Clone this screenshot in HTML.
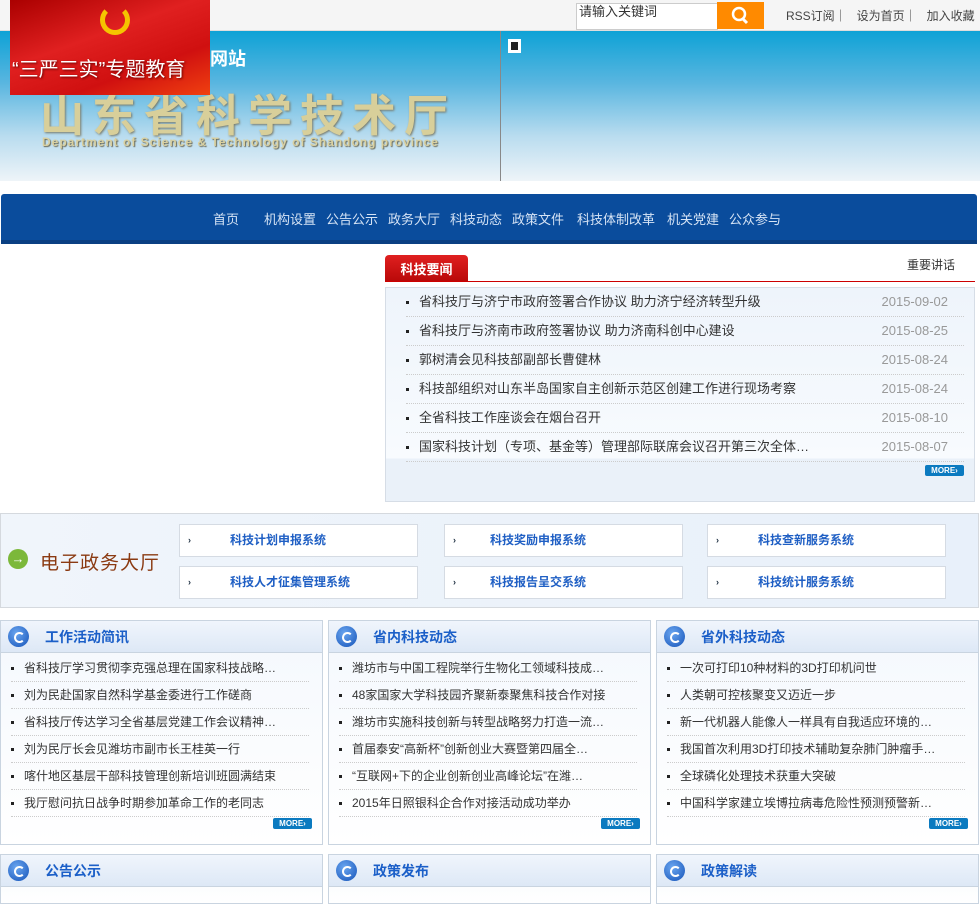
<!DOCTYPE html><html><head><meta charset="utf-8"><style>
*{margin:0;padding:0;box-sizing:border-box}
body{width:980px;height:891px;overflow:hidden;background:#fff;font-family:"Liberation Sans","Noto Sans CJK SC",sans-serif;font-size:13px;color:#333;position:relative}
.a{position:absolute}
.top{left:0;top:0;width:980px;height:31px;background:#f5f5f5;border-bottom:1px solid #ddd}
.banner{left:0;top:31px;width:980px;height:150px;background:linear-gradient(180deg,#0ea2d6 0%,#5ab6e0 35%,#b9dcef 70%,#eef4f8 100%)}
.nav{left:1px;top:194px;width:976px;height:50px;background:#0a4c9c;border-bottom:4px solid #0a3f82;border-radius:3px 3px 0 0}
.nav span{position:absolute;top:15px;color:#d5e3f5;font-size:13px}
.dot{display:inline-block;width:3px;height:3px;background:#222;margin-right:10px;vertical-align:middle}
.nl li{list-style:none;position:absolute;left:20px;right:10px;height:29px;border-bottom:1px dotted #ccc;font-size:13px;color:#333;line-height:28px}
.nl li b{position:absolute;right:16px;font-weight:normal;color:#999;font-size:13px}
.btn{position:absolute;width:239px;height:33px;background:#fff;border:1px solid #d5dbe3;color:#1f5fc4;font-weight:bold;font-size:12px;line-height:31px}
.btn i{position:absolute;left:8px;font-style:normal;font-size:9px;color:#234}
.btn span{position:absolute;left:50px}
.col{position:absolute;width:323px;border:1px solid #c9d4e0;background:linear-gradient(#f4f8fd,#fff)}
.ch{height:32px;background:linear-gradient(#f0f5fc,#dde8f6);border-bottom:1px solid #c9d4e0;position:relative}
.ch .ic{position:absolute;left:7px;top:5px;width:21px;height:21px;border-radius:50%;background:radial-gradient(circle at 40% 35%,#6aa6f0,#1553b8);}
.ch .ic:after{content:"";position:absolute;left:6px;top:6px;width:7px;height:7px;border-radius:50%;border:2px solid #fff;border-right-color:transparent}
.ch b{position:absolute;left:44px;top:6px;color:#1b5fc8;font-size:14px}
.cl li{list-style:none;position:absolute;left:10px;width:298px;height:27px;border-bottom:1px dotted #ccc;font-size:12px;line-height:26px;color:#333;white-space:nowrap;overflow:hidden}
.more{position:absolute;width:39px;height:11px;background:#0b7ac0;border-radius:2px;color:#fff;font-size:8px;font-weight:bold;text-align:center;line-height:11px}
</style></head><body>
<div class="a top"></div>
<div class="a" style="left:576px;top:3px;width:142px;height:27px;background:#fff;border:1px solid #ccc;font-size:13px;padding:0 2px;line-height:16px">请输入关键词</div>
<div class="a" style="left:717px;top:2px;width:47px;height:27px;background:#ff8a00"><svg width="47" height="27"><circle cx="22" cy="12" r="6" fill="none" stroke="#fff" stroke-width="2.5"/><line x1="26" y1="17" x2="30" y2="21" stroke="#fff" stroke-width="3"/></svg></div>
<div class="a" style="left:786px;top:7px;font-size:12px;color:#444">RSS订阅｜ &nbsp; 设为首页｜ &nbsp; 加入收藏</div>
<div class="a banner"></div>
<div class="a" style="left:500px;top:31px;width:1px;height:150px;background:#888"></div>
<div class="a" style="left:508px;top:39px;width:13px;height:14px;background:#fff"><div style="margin:3px;width:7px;height:8px;background:#222"></div></div>
<div class="a" style="left:40px;top:80px;font-size:44px;font-weight:bold;color:#d8cf9a;letter-spacing:8px;text-shadow:1px 1px 2px #776">山东省科学技术厅</div>
<div class="a" style="left:42px;top:135px;font-size:12px;font-weight:bold;color:#d9d0a0;letter-spacing:1px;text-shadow:1px 1px 1px #665">Department of Science &amp; Technology of Shandong province</div>
<div class="a" style="left:210px;top:45px;font-size:18px;font-weight:bold;color:#fff">网站</div>
<div class="a" style="left:10px;top:0;width:200px;height:95px;background:linear-gradient(160deg,#a00 0%,#e02020 40%,#d01010 70%,#f04010 100%)"></div>
<div class="a" style="left:100px;top:5px;width:30px;height:30px;border-radius:50%;border:5px solid #f5c400;border-top-color:transparent"></div>
<div class="a" style="left:12px;top:53px;font-size:20px;color:#fff;text-shadow:1px 1px 2px #600">“三严三实”专题教育</div>
<div class="a nav"><span style="left:212px">首页</span><span style="left:263px">机构设置</span><span style="left:325px">公告公示</span><span style="left:387px">政务大厅</span><span style="left:449px">科技动态</span><span style="left:511px">政策文件</span><span style="left:576px">科技体制改革</span><span style="left:666px">机关党建</span><span style="left:728px">公众参与</span></div>
<div class="a" style="left:385px;top:255px;width:83px;height:27px;background:linear-gradient(#e02020,#b80808);border-radius:4px 4px 0 0;color:#fff;font-weight:bold;font-size:13px;line-height:29px;text-align:center">科技要闻</div>
<div class="a" style="left:385px;top:281px;width:590px;height:1px;background:#c00"></div>
<div class="a" style="left:907px;top:256px;font-size:12px;color:#333">重要讲话</div>
<div class="a" style="left:385px;top:287px;width:590px;height:215px;border:1px solid #d6dde6;background:linear-gradient(#eef4fb,#f8fbfe 80%,#eaf1f9 80%)">
<ul class="nl">
<li style="top:0"><span class="dot"></span>省科技厅与济宁市政府签署合作协议 助力济宁经济转型升级<b>2015-09-02</b></li>
<li style="top:29px"><span class="dot"></span>省科技厅与济南市政府签署协议 助力济南科创中心建设<b>2015-08-25</b></li>
<li style="top:58px"><span class="dot"></span>郭树清会见科技部副部长曹健林<b>2015-08-24</b></li>
<li style="top:87px"><span class="dot"></span>科技部组织对山东半岛国家自主创新示范区创建工作进行现场考察<b>2015-08-24</b></li>
<li style="top:116px"><span class="dot"></span>全省科技工作座谈会在烟台召开<b>2015-08-10</b></li>
<li style="top:145px"><span class="dot"></span>国家科技计划（专项、基金等）管理部际联席会议召开第三次全体…<b>2015-08-07</b></li>
</ul>
<div class="more" style="left:539px;top:177px">MORE›</div></div>
<div class="a" style="left:0;top:513px;width:979px;height:95px;border:1px solid #d5d9de;background:linear-gradient(90deg,#f0f5fb,#e8f0fa)"></div>
<div class="a" style="left:8px;top:549px;width:20px;height:20px;border-radius:50%;background:#7cb83a;color:#fff;font-size:13px;text-align:center;line-height:20px;font-weight:bold">→</div>
<div class="a" style="left:40px;top:548px;font-size:19px;color:#8b3a12;letter-spacing:1px">电子政务大厅</div>
<div class="btn" style="left:179px;top:524px"><i>›</i><span>科技计划申报系统</span></div>
<div class="btn" style="left:444px;top:524px"><i>›</i><span style="left:45px">科技奖励申报系统</span></div>
<div class="btn" style="left:707px;top:524px"><i>›</i><span>科技查新服务系统</span></div>
<div class="btn" style="left:179px;top:566px"><i>›</i><span>科技人才征集管理系统</span></div>
<div class="btn" style="left:444px;top:566px"><i>›</i><span style="left:45px">科技报告呈交系统</span></div>
<div class="btn" style="left:707px;top:566px"><i>›</i><span>科技统计服务系统</span></div>

<div class="col" style="left:0;top:620px;height:225px"><div class="ch"><div class="ic"></div><b>工作活动简讯</b></div><ul class="cl">
<li style="top:34px"><span class="dot"></span>省科技厅学习贯彻李克强总理在国家科技战略…</li>
<li style="top:61px"><span class="dot"></span>刘为民赴国家自然科学基金委进行工作磋商</li>
<li style="top:88px"><span class="dot"></span>省科技厅传达学习全省基层党建工作会议精神…</li>
<li style="top:115px"><span class="dot"></span>刘为民厅长会见潍坊市副市长王桂英一行</li>
<li style="top:142px"><span class="dot"></span>喀什地区基层干部科技管理创新培训班圆满结束</li>
<li style="top:169px"><span class="dot"></span>我厅慰问抗日战争时期参加革命工作的老同志</li></ul><div class="more" style="left:272px;top:197px">MORE›</div></div>
<div class="col" style="left:328px;top:620px;height:225px"><div class="ch"><div class="ic"></div><b>省内科技动态</b></div><ul class="cl">
<li style="top:34px"><span class="dot"></span>潍坊市与中国工程院举行生物化工领域科技成…</li>
<li style="top:61px"><span class="dot"></span>48家国家大学科技园齐聚新泰聚焦科技合作对接</li>
<li style="top:88px"><span class="dot"></span>潍坊市实施科技创新与转型战略努力打造一流…</li>
<li style="top:115px"><span class="dot"></span>首届泰安“高新杯”创新创业大赛暨第四届全…</li>
<li style="top:142px"><span class="dot"></span>“互联网+下的企业创新创业高峰论坛”在潍…</li>
<li style="top:169px"><span class="dot"></span>2015年日照银科企合作对接活动成功举办</li></ul><div class="more" style="left:272px;top:197px">MORE›</div></div>
<div class="col" style="left:656px;top:620px;height:225px"><div class="ch"><div class="ic"></div><b>省外科技动态</b></div><ul class="cl">
<li style="top:34px"><span class="dot"></span>一次可打印10种材料的3D打印机问世</li>
<li style="top:61px"><span class="dot"></span>人类朝可控核聚变又迈近一步</li>
<li style="top:88px"><span class="dot"></span>新一代机器人能像人一样具有自我适应环境的…</li>
<li style="top:115px"><span class="dot"></span>我国首次利用3D打印技术辅助复杂肺门肿瘤手…</li>
<li style="top:142px"><span class="dot"></span>全球磷化处理技术获重大突破</li>
<li style="top:169px"><span class="dot"></span>中国科学家建立埃博拉病毒危险性预测预警新…</li></ul><div class="more" style="left:272px;top:197px">MORE›</div></div>
<div class="col" style="left:0;top:854px;height:50px"><div class="ch"><div class="ic"></div><b>公告公示</b></div></div>
<div class="col" style="left:328px;top:854px;height:50px"><div class="ch"><div class="ic"></div><b>政策发布</b></div></div>
<div class="col" style="left:656px;top:854px;height:50px"><div class="ch"><div class="ic"></div><b>政策解读</b></div></div>
</body></html>
